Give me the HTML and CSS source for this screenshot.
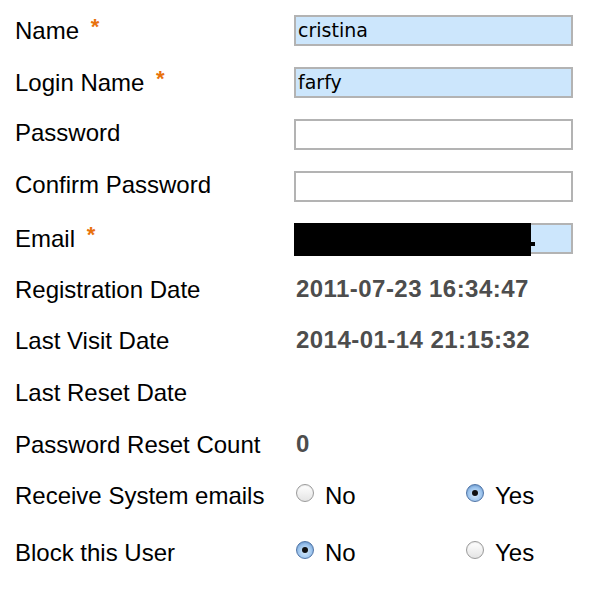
FILE: index.html
```html
<!DOCTYPE html>
<html>
<head>
<meta charset="utf-8">
<link rel="stylesheet" href="styles.css">
</head>
<body>
<form class="user-form">
  <div class="row r1">
    <div class="label">Name <span class="req">*</span></div>
    <div class="value"><input class="field filled" type="text" value="cristina"></div>
  </div>
  <div class="row r2">
    <div class="label">Login Name <span class="req">*</span></div>
    <div class="value"><input class="field filled" type="text" value="farfy"></div>
  </div>
  <div class="row r3">
    <div class="label">Password</div>
    <div class="value"><input class="field" type="password" value=""></div>
  </div>
  <div class="row r4">
    <div class="label">Confirm Password</div>
    <div class="value"><input class="field" type="password" value=""></div>
  </div>
  <div class="row r5">
    <div class="label">Email <span class="req">*</span></div>
    <div class="value email-wrap">
      <input class="field filled" type="text" value="">
      <div class="redact"></div>
      <div class="redact-dash"></div>
    </div>
  </div>
  <div class="row r6">
    <div class="label">Registration Date</div>
    <div class="value"><span class="static">2011-07-23 16:34:47</span></div>
  </div>
  <div class="row r7">
    <div class="label">Last Visit Date</div>
    <div class="value"><span class="static">2014-01-14 21:15:32</span></div>
  </div>
  <div class="row r8">
    <div class="label">Last Reset Date</div>
    <div class="value"></div>
  </div>
  <div class="row r9">
    <div class="label">Password Reset Count</div>
    <div class="value"><span class="static">0</span></div>
  </div>
  <div class="row r10">
    <div class="label">Receive System emails</div>
    <div class="value radios">
      <label class="opt"><input class="radio" type="radio" name="sendEmail"><span>No</span></label>
      <label class="opt"><input class="radio" type="radio" name="sendEmail" checked><span>Yes</span></label>
    </div>
  </div>
  <div class="row r11">
    <div class="label">Block this User</div>
    <div class="value radios">
      <label class="opt"><input class="radio" type="radio" name="block" checked><span>No</span></label>
      <label class="opt"><input class="radio" type="radio" name="block"><span>Yes</span></label>
    </div>
  </div>
</form>
</body>
</html>
```

FILE: styles.css
```css
html, body {
  margin: 0;
  padding: 0;
  background: #ffffff;
}

body {
  font-family: "Liberation Sans", Arial, Helvetica, sans-serif;
  color: #000;
}

.user-form {
  display: flex;
  flex-direction: column;
  padding: 4px 0 0 15px;
}

.row {
  display: grid;
  grid-template-columns: 279px 1fr;
  align-items: center;
  height: 52px;
}

.r6 { height: 50px; }
.r10 { height: 50px; }
.r11 { height: 64px; }

.label {
  font-size: 24px;
  line-height: 28px;
  white-space: nowrap;
  position: relative;
  top: 1px;
}

.r3 .label,
.r4 .label {
  top: -1px;
}

.req {
  color: #e8720c;
  font-weight: bold;
  font-size: 22px;
  position: relative;
  top: -5px;
  margin-left: 5px;
}

.value {
  display: flex;
  align-items: center;
}

.field {
  box-sizing: border-box;
  width: 279px;
  height: 31px;
  margin: 0;
  padding: 0 0 0 2px;
  border: 2px solid #b3b3b3;
  border-radius: 0;
  background: #ffffff;
  font-family: "DejaVu Sans", "Lucida Grande", sans-serif;
  font-size: 19px;
  color: #000;
  outline: none;
}

.field.filled {
  background: #cce6fc;
}

.email-wrap {
  position: relative;
}

.redact {
  position: absolute;
  left: 0;
  top: 0;
  width: 237px;
  height: 33px;
  background: #000;
}

.redact-dash {
  position: absolute;
  left: 237px;
  top: 19px;
  width: 4px;
  height: 4px;
  background: #000;
}

.static {
  font-size: 24px;
  font-weight: bold;
  color: #4d4d4d;
  margin-left: 2px;
  letter-spacing: 0.45px;
}

.radios {
  display: flex;
  margin-bottom: 4px;
  padding-left: 2px;
}

.opt {
  display: flex;
  align-items: center;
  width: 170px;
  font-size: 24px;
  line-height: 28px;
}

.opt span {
  position: relative;
  top: 3px;
}

.radio {
  appearance: none;
  -webkit-appearance: none;
  box-sizing: border-box;
  width: 18px;
  height: 18px;
  margin: 0 11px 0 0;
  border-radius: 50%;
  border: 1px solid #9a9a9a;
  background: linear-gradient(#ffffff, #e4e4e4);
  box-shadow: inset 0 1px 1px rgba(0,0,0,0.08);
  position: relative;
}

.radio:checked {
  border-color: #4f74a6;
  background: radial-gradient(circle at 50% 60%, #d9ebfb 0%, #a8ccf0 45%, #5f95d6 100%);
}

.radio:checked::after {
  content: "";
  position: absolute;
  left: 5px;
  top: 5px;
  width: 6px;
  height: 6px;
  border-radius: 50%;
  background: #111;
}
```
